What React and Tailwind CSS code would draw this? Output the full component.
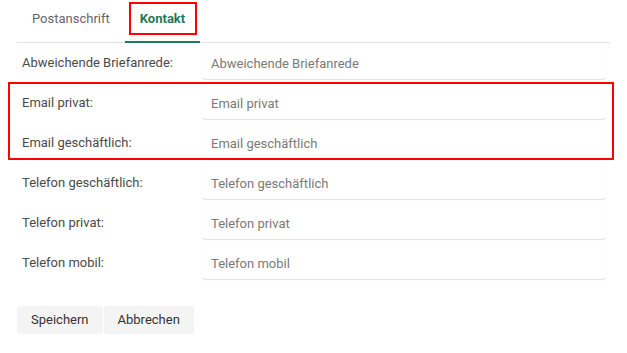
import React from 'react';

const font = { fontFamily: 'Roboto, "Liberation Sans", sans-serif' };

const Row = ({ label }) => (
  <div className="flex items-center h-10">
    <label className="w-[185px] pl-[5px] text-[13px] text-[#4a4a4a]">{label}:</label>
    <input
      placeholder={label}
      className="w-[404px] h-8 px-[9px] text-[13px] text-[#333] placeholder:text-[#7a7a7a] bg-white rounded-[4px] shadow-[0_1px_1px_rgba(0,0,0,0.12)] outline-none"
    />
  </div>
);

export default function App() {
  return (
    <div className="bg-white w-[627px] h-[353px] pl-[17px]" style={font}>
      <div className="w-[593px]">
        {/* Tabs */}
        <div className="flex h-[43px] border-b border-[#e2e2e6]">
          <button className="px-[15px] text-[13px] text-[#666] pb-[4px]">Postanschrift</button>
          <button className="relative px-[15px] text-[13px] font-bold text-[#1f7a5c] pb-[4px] border-b-2 border-[#1f7a5c] -mb-px">
            Kontakt
            <span className="absolute left-[4px] top-[2px] w-[68px] h-[33px] border-2 border-[#f00]" />
          </button>
        </div>

        {/* Fields */}
        <Row label="Abweichende Briefanrede" />
        <div className="relative">
          <Row label="Email privat" />
          <Row label="Email geschäftlich" />
          <span className="absolute -left-[9px] -right-[4px] -top-px bottom-[3px] border-2 border-[#f00] pointer-events-none" />
        </div>
        <Row label="Telefon geschäftlich" />
        <Row label="Telefon privat" />
        <Row label="Telefon mobil" />

        {/* Actions */}
        <div className="flex gap-px mt-[23px]">
          <button className="h-7 px-[14px] text-[13px] text-[#333] bg-[#f4f4f4] rounded-[3px]">Speichern</button>
          <button className="h-7 px-[14px] text-[13px] text-[#333] bg-[#f4f4f4] rounded-[3px]">Abbrechen</button>
        </div>
      </div>
    </div>
  );
}
